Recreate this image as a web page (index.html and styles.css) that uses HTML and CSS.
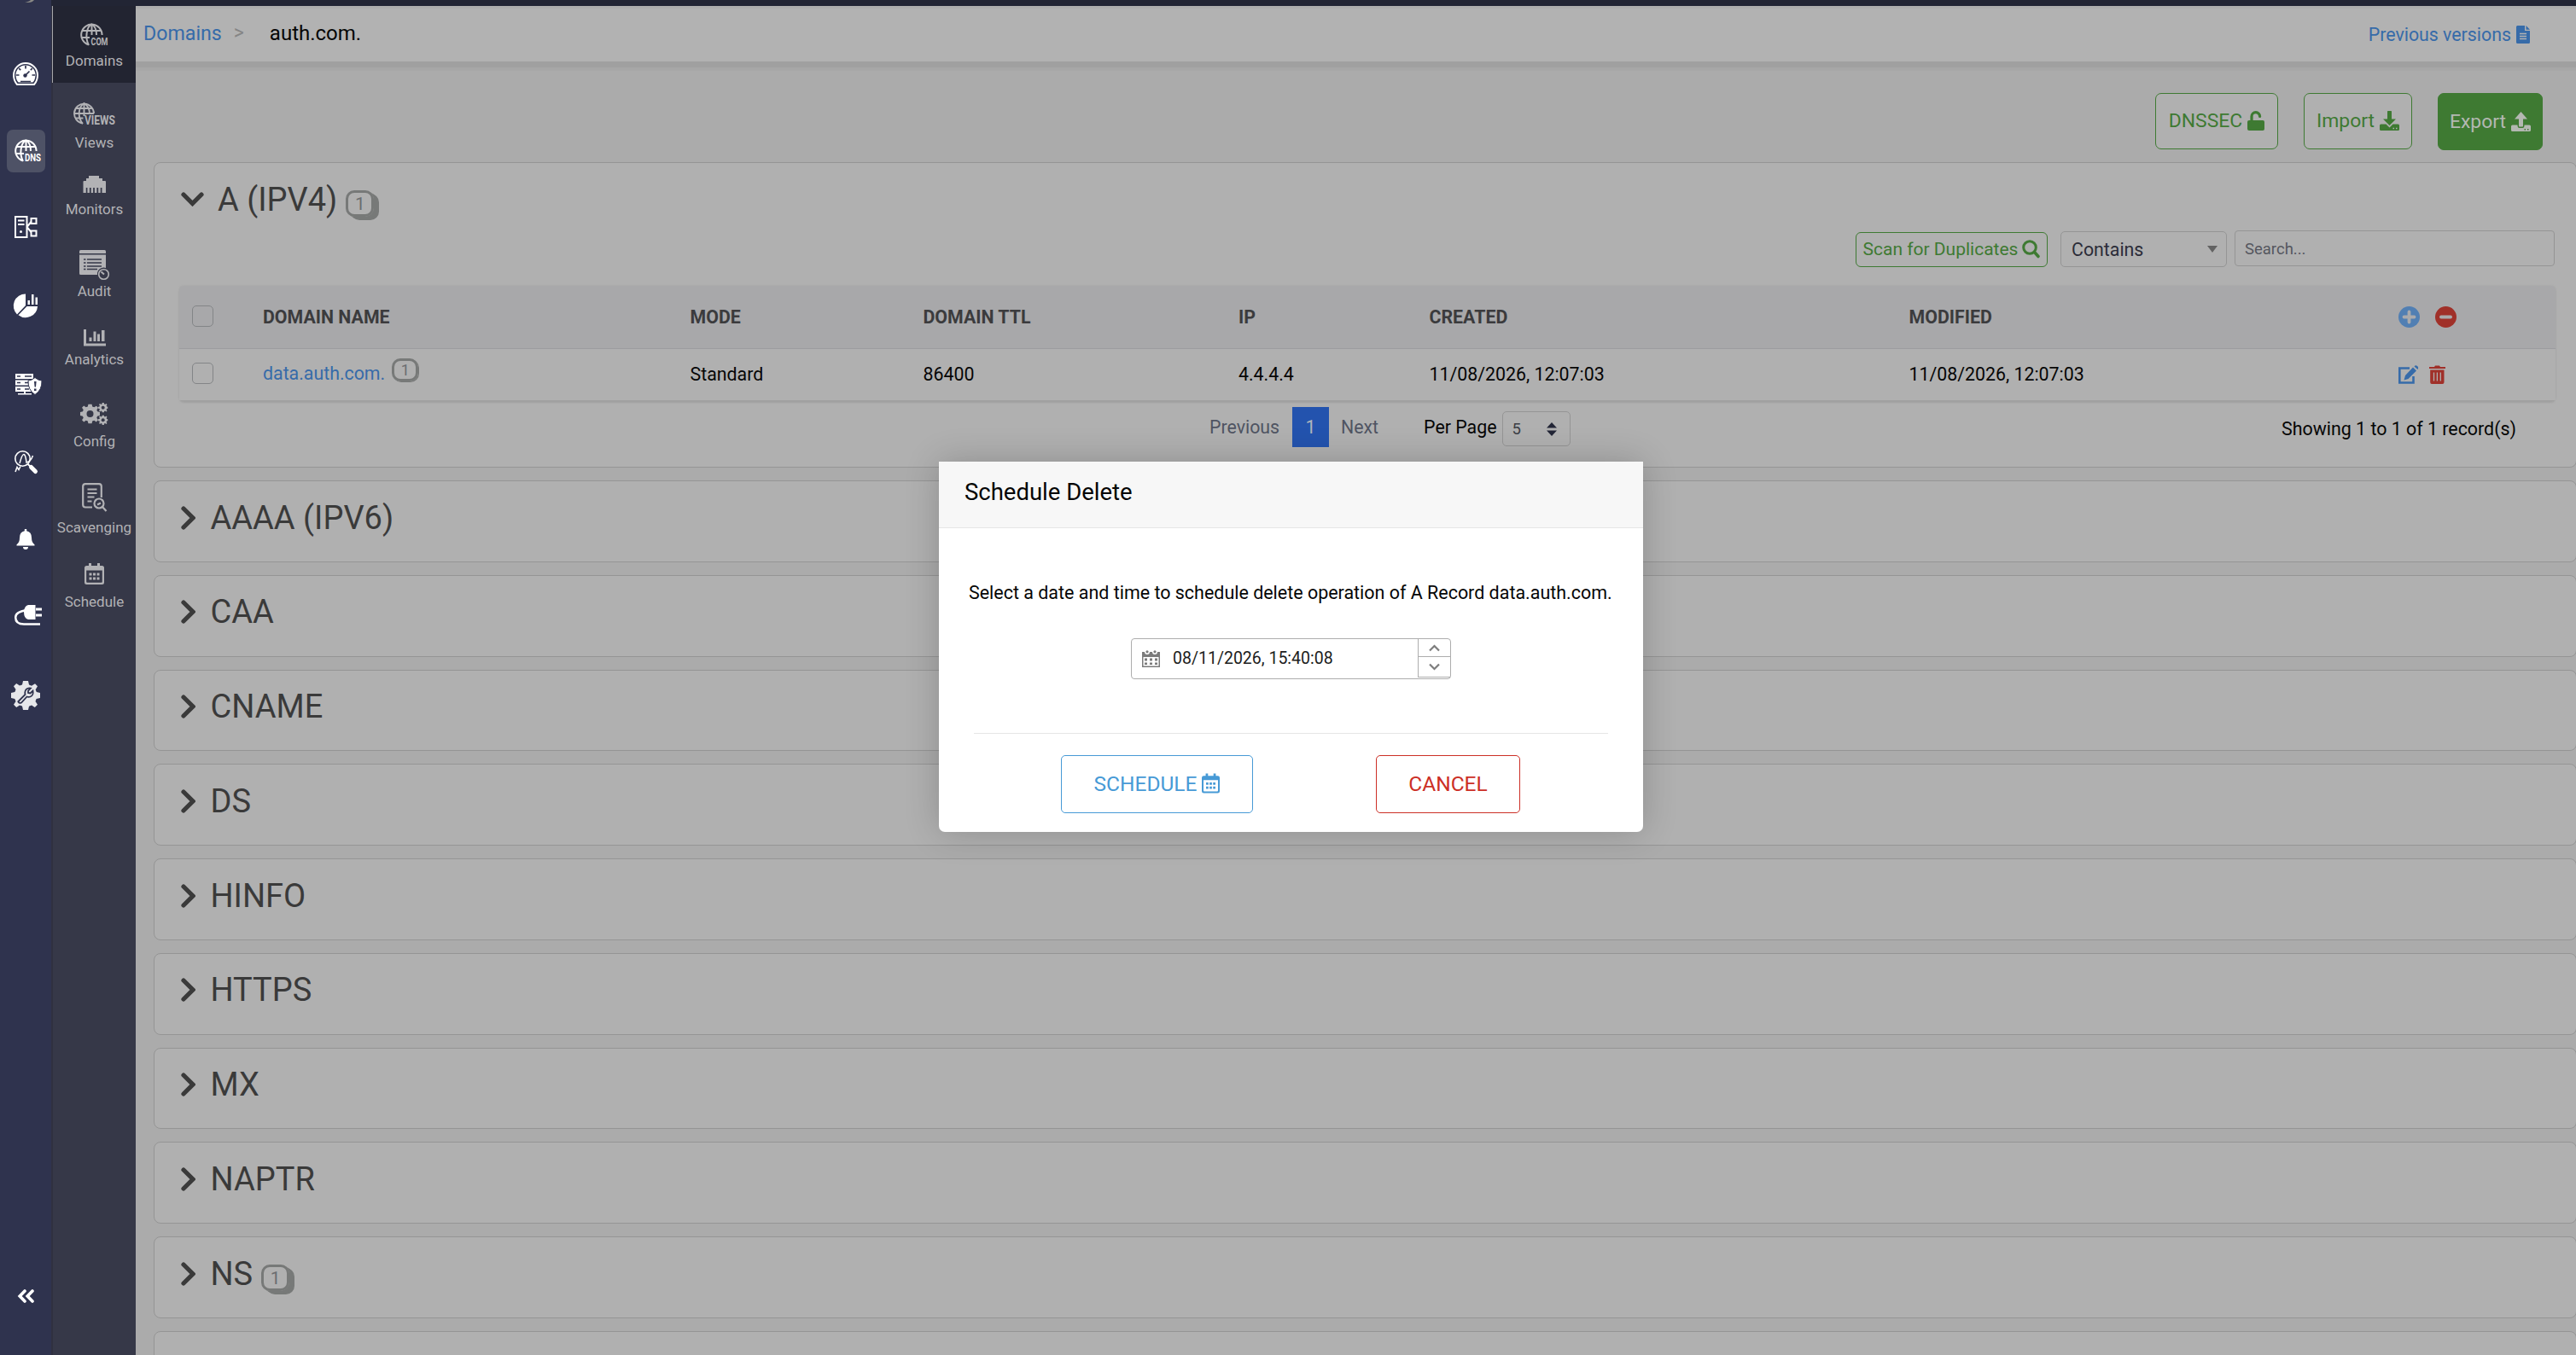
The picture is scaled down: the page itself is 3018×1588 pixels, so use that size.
FILE: index.html
```html
<!DOCTYPE html>
<html lang="en">

<head>
  <meta charset="UTF-8">
  <meta name="viewport" content="width=device-width, initial-scale=1.0">
  <title>auth.com. - Domains</title>
  <link rel="stylesheet" href="styles.css">
</head>

<body>
  <svg class="sprite">
    <symbol id="globe" viewBox="0 0 27 27">
      <g fill="none" stroke="currentColor" stroke-width="2">
        <path d="M9 25.2A12.2 12.2 0 1 1 25.6 14" />
        <path d="M10 26C5.500 18 7 4 13.500 1.500C17 3.500 19 8.500 19 14M2 9h23M1.500 17h9.500M13.500 1.500V14" />
      </g>
    </symbol>
    <symbol id="globe-grid" viewBox="0 0 26 26">
      <g fill="none" stroke="currentColor" stroke-width="1.900">
        <path d="M11 24.500A11.500 11.500 0 1 1 24 13" />
        <path d="M11 25C5 18 5 6 12.500 1C17 4 19 8 19 13.500M12.500 1V16M3 7h19M1 13h23M2.500 18.500h9" />
      </g>
    </symbol>
    <symbol id="chevron-right" viewBox="0 0 17 28">
      <path d="M3 3L14 14L3 25" fill="none" stroke="currentColor" stroke-width="5.200" stroke-linecap="round" stroke-linejoin="miter" />
    </symbol>
    <symbol id="chevron-down" viewBox="0 0 27 17">
      <path d="M3 3L13.500 13.500L24 3" fill="none" stroke="currentColor" stroke-width="5.200" stroke-linecap="round" />
    </symbol>
    <symbol id="calendar" viewBox="0 0 23 25">
      <path fill="currentColor" fill-rule="evenodd" d="M5 0h3v3h7V0h3v3h2.500Q23 3 23 5.500V22.500Q23 25 20.500 25H2.500Q0 25 0 22.500V5.500Q0 3 2.500 3H5zM2.200 8.500V21.800Q2.200 22.800 3.200 22.800H19.800Q20.800 22.800 20.800 21.800V8.500z" />
      <path fill="currentColor" d="M5.500 11.500h3v3h-3zM10 11.500h3v3h-3zM14.500 11.500h3v3h-3zM5.500 16.500h3v3h-3zM10 16.500h3v3h-3zM14.500 16.500h3v3h-3z" />
    </symbol>
    <symbol id="gear" viewBox="0 0 34 34">
      <path d="M14 0h6l1 4.500l3 1.200L28 3.200L31 6.300L28.600 10.200L29.800 13L34 14v6l-4.400 1L28.500 24L31 27.800L27.800 31L24 28.400L21 29.700L20 34h-6l-1-4.400L10 28.400L6.200 31L3 27.800L5.500 24L4.300 21L0 20v-6l4.400-1L5.500 10L3 6.200L6.200 3L10 5.600L13 4.400z" stroke-linejoin="round" />
    </symbol>
  </svg>

  <div class="app">
    <nav class="rail">
      <svg class="rail-logo" width="12" height="4"><path d="M0 2.500Q8 4 11 0H7Q5 2 0 2.500z" fill="#8a8a86" /></svg>
      <svg width="30" height="27" viewBox="0 0 30 27">
        <path d="M5 26Q1 21.500 1 15A14 14 0 0 1 29 15Q29 21.500 25 26z" fill="none" stroke="#fff" stroke-width="2" />
        <path d="M6.500 23.500Q3.500 20 3.500 15A11.500 11.500 0 0 1 26.500 15Q26.500 20 23.500 23.500z" fill="#fff" />
        <path d="M4 15h3.500M22.500 15H26M15 4v3.500M7.200 7.200l2 2M22.800 7.200l-2 2M14.500 15.500l5-5M9 22.500h12" stroke="#2f334e" stroke-width="1.700" />
        <circle cx="14.500" cy="15.500" r="2.200" fill="#2f334e" />
      </svg>
      <div class="rail-active">
        <svg width="31" height="27" viewBox="0 0 31 27">
          <use href="#globe" width="27" height="27" />
          <text x="12" y="26" font-size="12.500" textLength="19" lengthAdjust="spacingAndGlyphs">DNS</text>
        </svg>
      </div>
      <svg width="27" height="26" viewBox="0 0 27 26">
        <g fill="none" stroke="#fff" stroke-width="2">
          <path d="M1 1h13.500v24H1zM4 5.500h7.500M4 10h7.500M14.500 13l5-6M14.500 13l5 6" />
          <path d="M19.500 3h6v6h-6zM19.500 17.500h6v6h-6z" />
        </g>
        <circle cx="7.500" cy="18.500" r="1.500" fill="#fff" />
      </svg>
      <svg width="28" height="29" viewBox="0 0 28 29" fill="#fff">
        <path d="M14 0.500V14L4 24.500A14 14 0 0 1 14 0.500z" />
        <path d="M15.500 15H28A14 14 0 0 1 5.500 25.200z" />
        <path d="M16.500 8h2.500v5h-2.500zM21 1h2.500v12H21zM25.500 4.500h2.500v8.500h-2.500z" />
      </svg>
      <svg class="wide" width="31" height="25" viewBox="0 0 31 25">
        <path d="M0 0h21v6H0zM0 7.500h21v6H0zM0 15h21v6H0zM3 23h16v1.500H3zM10 21h2v3h-2z" fill="#fff" />
        <path d="M2 3h4M2 10.500h4M2 18h4M11 3h8M11 10.500h5M11 18h5" stroke="#2f334e" stroke-width="1.400" />
        <path d="M23 4.500Q27 8 31 8Q31.500 19 23 24.500Q14.500 19 15 8Q19 8 23 4.500z" fill="#fff" stroke="#2f334e" stroke-width="1" />
        <path d="M22 9h2.600l-.6 6.500h-1.400zM22 17.500h2.500v2.500H22z" fill="#2f334e" />
      </svg>
      <svg width="27" height="27" viewBox="0 0 27 27">
        <circle cx="9.500" cy="9.500" r="8.700" fill="none" stroke="#fff" stroke-width="1.600" />
        <path d="M1 25l2-5.500l2 3l2-4M6 15Q9 4 11 4.500Q13 5 14 14Q19 13 21.500 6" fill="none" stroke="#fff" stroke-width="1.500" />
        <path d="M15.500 16l3 2.500" stroke="#fff" stroke-width="2" />
        <path d="M19.500 19.500L24.500 24.500" stroke="#fff" stroke-width="5" stroke-linecap="round" />
      </svg>
      <svg width="22" height="24" viewBox="0 0 22 24" fill="#fff">
        <path d="M9.800 0h2.400v2.200Q18 3.500 18 10Q18 16 21.500 18.200V19.500H.5V18.200Q4 16 4 10Q4 3.500 9.800 2.200z" />
        <path d="M8 21h6Q14 24 11 24T8 21z" />
      </svg>
      <svg class="wide" width="32" height="24" viewBox="0 0 32 24">
        <path d="M14 6Q1.200 8 1.200 14.500Q1.200 22.500 11 22.500H30" fill="none" stroke="#fff" stroke-width="2.500" />
        <path d="M16 0h8.500v17H16Q11 15.500 11 8.500T16 0zM25 3.500h7v3h-7zM25 10.500h7v3h-7z" fill="#fff" />
      </svg>
      <svg width="34" height="34" viewBox="0 0 34 34">
        <use href="#gear" width="34" height="34" fill="#e6e7ea" />
        <path d="M9 23.500L16.500 16Q15.500 11 19 9Q21 8 23 8.500L20 11.500V14l2.500.5L25.500 11.500Q26.500 17 22.500 18.500Q20.500 19.300 18.500 18.500L12 25.500Q10.500 26.500 9 25.200T9 23.500z" fill="none" stroke="#2f334e" stroke-width="1.800" />
      </svg>
      <svg class="rail-collapse" width="19" height="16" viewBox="0 0 19 16">
        <path d="M8 2L2.200 8L8 14M17 2L11.200 8L17 14" fill="none" stroke="#fff" stroke-width="3.600" stroke-linecap="round" />
      </svg>
    </nav>

    <div class="right">
      <div class="topbar"></div>
      <div class="body">
        <nav class="subnav">
          <a class="item domains active">
            <svg width="33" height="27" viewBox="0 0 33 27">
              <use href="#globe" width="27" height="27" />
              <text x="12.500" y="26" font-size="13" textLength="20" lengthAdjust="spacingAndGlyphs">COM</text>
            </svg>
            Domains
          </a>
          <a class="item views">
            <svg width="49" height="27" viewBox="0 0 49 27">
              <use href="#globe-grid" width="26" height="26" />
              <text x="13" y="25.500" font-size="14" textLength="36" lengthAdjust="spacingAndGlyphs">VIEWS</text>
            </svg>
            Views
          </a>
          <a class="item monitors">
            <svg width="27" height="20" viewBox="0 0 27 20">
              <path fill="currentColor" d="M7 0h12v3h4v3h3q1 0 1 1v13h-4.500v-6h-1.800v6h-2.500v-6h-1.800v6h-2.500v-6h-1.800v6H9.700v-6H7.900v6H5.400v-6H3.800v6H.5V7q0-1 1-1H4V3h3z" />
            </svg>
            Monitors
          </a>
          <a class="item audit">
            <svg width="35" height="35" viewBox="0 0 35 35">
              <path fill="currentColor" d="M1.500 0h28Q31 0 31 1.500V4H0V1.500Q0 0 1.500 0zM0 5.500h31V21A7.500 7.500 0 0 0 21 29H1.500Q0 29 0 27.500z" />
              <path d="M5 11h2.500M9 11h17M5 15h2.500M9 15h17M5 19h2.500M9 19h17M5 22.500h2.500M9 22.500h12" stroke="#363848" stroke-width="1.700" />
              <circle cx="28.500" cy="28.500" r="5.800" fill="none" stroke="currentColor" stroke-width="1.600" />
              <path d="M25.500 25.500l3.500 3" stroke="currentColor" stroke-width="2" />
            </svg>
            Audit
          </a>
          <a class="item analytics">
            <svg width="26" height="20" viewBox="0 0 26 20">
              <path fill="currentColor" d="M0 0h3v16.500h23V19.500H0zM6.500 9.500h3V14h-3zM11.500 2.500h3V14h-3zM16 5.500h3V14h-3zM21 1h3.500v13H21z" />
            </svg>
            Analytics
          </a>
          <a class="item config">
            <svg width="33" height="26" viewBox="0 0 33 26">
              <use href="#gear" x="0" y="1.500" width="23" height="23" fill="currentColor" />
              <use href="#gear" x="21" y="0" width="11.500" height="11.500" fill="currentColor" />
              <use href="#gear" x="21" y="14.500" width="11.500" height="11.500" fill="currentColor" />
              <g fill="#363848"><circle cx="11.500" cy="13" r="4" /><circle cx="26.700" cy="5.700" r="2" /><circle cx="26.700" cy="20.200" r="2" /></g>
            </svg>
            Config
          </a>
          <a class="item scavenging">
            <svg width="29" height="34" viewBox="0 0 29 34">
              <g fill="none" stroke="currentColor" stroke-width="2.200">
                <path d="M12 28.500H4Q1.200 28.500 1.200 25.500V4Q1.200 1.200 4 1.200H20Q22.800 1.200 22.800 4V17" />
                <path d="M6.500 7.500h11M6.500 12h11M6.500 16.500h8M6.500 21.500h5" stroke-width="1.800" />
                <circle cx="20" cy="24" r="5.500" />
                <path d="M24 28l4.500 5M18 25.500l4-2" />
              </g>
            </svg>
            Scavenging
          </a>
          <a class="item schedule">
            <svg width="23" height="25"><use href="#calendar" /></svg>
            Schedule
          </a>
        </nav>

        <main class="main">
          <header class="header">
            <a class="crumb">Domains</a>
            <span class="sep">&gt;</span>
            <span class="current">auth.com.</span>
            <a class="versions">Previous versions
              <svg width="16" height="21" viewBox="0 0 16 21">
                <path fill="currentColor" d="M1.500 0H10v6h6v13.500q0 1.500-1.500 1.500h-13Q0 21 0 19.500v-18Q0 0 1.500 0zM11.500 0L16 4.700h-4.500z" />
                <path d="M4 9.500h8M4 12.500h8M4 15.500h8" stroke="#b2b2b2" stroke-width="1.300" />
              </svg>
            </a>
          </header>

          <div class="actions">
            <button class="btn dnssec">DNSSEC
              <svg width="20" height="23" viewBox="0 0 20 23">
                <path d="M5 12V6.500A4.800 4.800 0 0 1 14.600 6.500" fill="none" stroke="currentColor" stroke-width="3.200" stroke-linecap="round" />
                <rect y="11" width="20" height="12" rx="2" fill="currentColor" />
              </svg>
            </button>
            <button class="btn import">Import
              <svg width="23" height="23" viewBox="0 0 23 23" fill="currentColor">
                <path d="M9.700 0h3.600q.7 0 .7.700V9.500h5L11.500 17L4 9.500h5V.7Q9 0 9.700 0z" />
                <path d="M1.500 15.500H7.500L11.500 19.500L15.500 15.500h6Q23 15.500 23 17v4.500Q23 23 21.500 23h-20Q0 23 0 21.500V17Q0 15.500 1.500 15.500z" />
                <path d="M15.500 20.500h1.500M19 20.500h1.500" stroke="#b0b0b0" stroke-width="1.500" />
              </svg>
            </button>
            <button class="btn export">Export
              <svg width="23" height="23" viewBox="0 0 23 23" fill="currentColor">
                <path d="M9.700 17.500h3.600q.7 0 .7-.7V8.500h5L11.500 0L4 8.500h5v8.300q0 .7.700.7z" />
                <path d="M1.500 15.500H7.500Q7.500 19 9.700 19h3.600Q15.500 19 15.500 15.500h6Q23 15.500 23 17v4.500Q23 23 21.500 23h-20Q0 23 0 21.500V17Q0 15.500 1.500 15.500z" />
                <path d="M15.500 20.700h1.500M19 20.700h1.500" stroke="#3e7a32" stroke-width="1.500" />
              </svg>
            </button>
          </div>

          <section class="card open">
            <div class="title">
              <svg width="27" height="17"><use href="#chevron-down" /></svg>
              A (IPV4)
              <span class="badge">1</span>
            </div>

            <div class="toolbar">
              <button class="scan">Scan for Duplicates
                <svg width="21" height="22" viewBox="0 0 21 22">
                  <circle cx="9" cy="9" r="7.300" fill="none" stroke="currentColor" stroke-width="3" />
                  <path d="M14.500 14.500L19 19.500" stroke="currentColor" stroke-width="3.600" stroke-linecap="round" />
                </svg>
              </button>
              <div class="select">Contains
                <svg width="12" height="8"><path d="M0 0h12L6 8z" fill="#626262" /></svg>
              </div>
              <div class="search">Search...</div>
            </div>

            <div class="table">
              <div class="row head">
                <span><i class="check"></i></span>
                <span>DOMAIN NAME</span>
                <span>MODE</span>
                <span>DOMAIN TTL</span>
                <span>IP</span>
                <span>CREATED</span>
                <span>MODIFIED</span>
                <span class="icons">
                  <svg width="25" height="25" viewBox="0 0 25 25">
                    <circle cx="12.500" cy="12.500" r="12.500" fill="#517fb3" />
                    <path d="M12.500 6.500v12M6.500 12.500h12" stroke="#aaaaac" stroke-width="3.800" stroke-linecap="round" />
                  </svg>
                  <svg class="minus" width="25" height="25" viewBox="0 0 25 25">
                    <circle cx="12.500" cy="12.500" r="12.500" fill="#a03029" />
                    <path d="M7 12.500h11" stroke="#aaaaac" stroke-width="4" stroke-linecap="round" />
                  </svg>
                </span>
              </div>
              <div class="row">
                <span><i class="check"></i></span>
                <span><a class="link">data.auth.com.</a><b class="badge small">1</b></span>
                <span>Standard</span>
                <span>86400</span>
                <span>4.4.4.4</span>
                <span>11/08/2026, 12:07:03</span>
                <span>11/08/2026, 12:07:03</span>
                <span class="icons">
                  <svg width="24" height="22" viewBox="0 0 24 22">
                    <path d="M13 3.500H1.300V20.500H17.500V13" fill="none" stroke="#366ba9" stroke-width="2.600" />
                    <path d="M17 2.500l4 4L11.500 16L6.500 17.500L8 12zM18.500 1.500Q20-.5 22 1T22.500 5z" fill="#366ba9" />
                  </svg>
                  <svg class="trash" width="19" height="22" viewBox="0 0 19 22">
                    <path d="M0 2h6l1-1.500h5L13 2h6v2H0zM1.200 5.500H17.500V20Q17.500 22 15.500 22h-12.500Q1.200 22 1.200 20z" fill="#a03029" />
                    <path d="M5.500 8.500v10M9.400 8.500v10M13.300 8.500v10" stroke="#b0b0b0" stroke-width="1.300" />
                  </svg>
                </span>
              </div>
            </div>

            <div class="paging">
              <div class="pages">
                <span class="prev">Previous</span>
                <span class="page">1</span>
                <span class="next">Next</span>
              </div>
              <span class="per">Per Page</span>
              <div class="size">5
                <svg width="12" height="16"><path d="M0 6.500L6 0L12 6.500zM0 9.500h12L6 16z" fill="#222536" /></svg>
              </div>
              <span class="showing">Showing 1 to 1 of 1 record(s)</span>
            </div>
          </section>

          <section class="card"><div class="title"><svg width="17" height="28"><use href="#chevron-right" /></svg>AAAA (IPV6)</div></section>
          <section class="card"><div class="title"><svg width="17" height="28"><use href="#chevron-right" /></svg>CAA</div></section>
          <section class="card"><div class="title"><svg width="17" height="28"><use href="#chevron-right" /></svg>CNAME</div></section>
          <section class="card"><div class="title"><svg width="17" height="28"><use href="#chevron-right" /></svg>DS</div></section>
          <section class="card"><div class="title"><svg width="17" height="28"><use href="#chevron-right" /></svg>HINFO</div></section>
          <section class="card"><div class="title"><svg width="17" height="28"><use href="#chevron-right" /></svg>HTTPS</div></section>
          <section class="card"><div class="title"><svg width="17" height="28"><use href="#chevron-right" /></svg>MX</div></section>
          <section class="card"><div class="title"><svg width="17" height="28"><use href="#chevron-right" /></svg>NAPTR</div></section>
          <section class="card"><div class="title"><svg width="17" height="28"><use href="#chevron-right" /></svg>NS<span class="badge">1</span></div></section>
          <section class="card"></section>
        </main>
      </div>
    </div>
  </div>

  <div class="modal">
    <div class="modal-head">Schedule Delete</div>
    <div class="modal-body">
      <p>Select a date and time to schedule delete operation of A Record data.auth.com.</p>
      <div class="picker">
        <svg width="21" height="20" viewBox="0 0 21 20">
          <path fill="#7b7b7b" fill-rule="evenodd" d="M0 2h3a3 3 0 0 0 6 0h3a3 3 0 0 0 6 0h3v18H0zM1.500 8v10.500h18V8z" />
          <circle cx="6" cy="1.800" r="1.600" fill="#7b7b7b" /><circle cx="15" cy="1.800" r="1.600" fill="#7b7b7b" />
          <path fill="#7b7b7b" d="M3 9.500h3v3H3zM9 9.500h3v3H9zM15 9.500h3v3h-3zM3 14.500h3v2.500H3zM9 14.500h3v2.500H9zM15 14.500h3v2.500h-3z" />
        </svg>
        <span class="value">08/11/2026, 15:40:08</span>
        <div class="spin">
          <span><svg width="13" height="9"><path d="M1 7.500L6.500 2L12 7.500" fill="none" stroke="#7d7d7d" stroke-width="2.200" /></svg></span>
          <span><svg width="13" height="9"><path d="M1 1.500L6.500 7L12 1.500" fill="none" stroke="#7d7d7d" stroke-width="2.200" /></svg></span>
        </div>
      </div>
    </div>
    <div class="modal-foot">
      <button class="mbtn blue">SCHEDULE<svg width="21" height="24"><use href="#calendar" /></svg></button>
      <button class="mbtn red">CANCEL</button>
    </div>
  </div>
</body>

</html>
```
FILE: styles.css
```css
:root {
  --rail: #2f334e;
  --subnav: #363848;
  --dark: #222534;
  --green: #3e7a32;
  --blue: #366ba9;
  --line: #959595;
}

* {
  box-sizing: border-box;
}

html,
body {
  margin: 0;
  height: 100%;
  overflow: hidden;
  font-family: Roboto, sans-serif;
  font-size: 21.33px;
  color: #060606;
}

button {
  font-family: inherit;
  background: none;
}

svg {
  display: block;
  flex-shrink: 0;
  overflow: visible;
}

.sprite {
  position: absolute;
  width: 0;
  height: 0;
}

.app {
  display: flex;
  height: 100%;
}

/* left rail */
.rail {
  width: 60px;
  flex-shrink: 0;
  display: flex;
  flex-direction: column;
  align-items: center;
  gap: 65px;
  background: var(--rail);
  padding-bottom: 61px;

  .rail-logo {
    margin: 0 0 4px 10px;
  }

  .wide {
    margin-left: 6px;
  }
}

.rail-active {
  width: 45px;
  height: 50px;
  margin: -13px 0 -14px 1px;
  padding: 11px 0 0 9px;
  border-radius: 7px;
  background: #4e5266;
  color: #fff;
}

.rail-collapse {
  margin-top: auto;
}

.rail-active text,
.item text {
  font-family: Roboto, sans-serif;
  font-weight: 700;
  fill: currentColor;
}

.right {
  flex: 1;
  min-width: 0;
  display: flex;
  flex-direction: column;
}

.topbar {
  height: 7px;
  flex-shrink: 0;
  background: var(--dark);
}

.body {
  flex: 1;
  min-height: 0;
  display: flex;
}

/* second nav */
.subnav {
  width: 99px;
  flex-shrink: 0;
  background: var(--subnav);
  border-left: 2px solid #303140;
}

.item {
  display: flex;
  flex-direction: column;
  align-items: center;
  gap: 9px;
  font-size: 17px;
  line-height: 20px;
  color: #b2b2b5;

  &.domains {
    height: 90px;
    margin-left: -1px;
    padding-top: 20px;
    gap: 7px;
    background: #222431;
    border-left: 1px solid #a8a8aa;
  }

  &.views {
    padding-top: 23px;
    gap: 10px;
  }

  &.monitors {
    padding-top: 29px;
  }

  &.audit {
    padding-top: 38px;
    gap: 3px;
  }

  &.analytics {
    padding-top: 35px;
    gap: 5px;
  }

  &.config {
    padding-top: 41px;
    gap: 9px;
  }

  &.scavenging {
    padding-top: 39px;
    gap: 8px;
  }

  &.schedule {
    padding-top: 32px;
    gap: 10px;
  }
}

/* page */
.main {
  flex: 1;
  min-width: 0;
  overflow: hidden;
  background: #ababab;
}

.header {
  display: flex;
  align-items: center;
  height: 72px;
  padding: 0 54px 2px 9px;
  background: #b2b2b2;
  border-bottom: 7px solid #a0a0a0;
  box-shadow: inset 0 3px 0 #adadad, 0 4px 0 #a7a7a7;

  .crumb {
    font-size: 23.2px;
    color: var(--blue);
  }

  .sep {
    margin-left: 14px;
    font-size: 23px;
    color: #858585;
  }

  .current {
    margin-left: 30px;
    font-size: 24px;
  }

  .versions {
    display: flex;
    align-items: center;
    gap: 6px;
    margin-left: auto;
    padding-top: 4px;
    color: var(--blue);
  }
}

.actions {
  display: flex;
  align-items: flex-start;
  justify-content: flex-end;
  height: 67px;
  margin: 30px 39px 14px 0;
}

.btn {
  display: flex;
  align-items: center;
  justify-content: center;
  gap: 6px;
  height: 66px;
  padding: 0 0 2px;
  font-size: 22.9px;
  color: var(--green);
  background: #b0b0b0;
  border: 1px solid var(--green);
  border-radius: 7px;

  &.dnssec {
    width: 144px;
  }

  &.import {
    width: 127px;
    margin-left: 30px;
  }

  &.export {
    width: 123px;
    height: 67px;
    margin-left: 30px;
    padding-bottom: 1px;
    color: #b4b8b2;
    background: var(--green);
  }
}

.card {
  width: 2839px;
  height: 95.75px;
  margin: 0 0 15px 21px;
  padding-top: 19px;
  background: #b0b0b0;
  border: 1px solid var(--line);
  border-radius: 8px;

  &.open {
    height: auto;
    padding-bottom: 23px;

    .title svg {
      margin-right: 16px;
    }
  }
}

.title {
  display: flex;
  align-items: center;
  height: 47px;
  padding-left: 31px;
  font-size: 38px;
  color: #3a3a3a;

  svg {
    margin-right: 17.500px;
  }
}

.badge {
  width: 33px;
  height: 31px;
  margin: 10px 0 0 10px;
  font-size: 21px;
  font-weight: 400;
  line-height: 26px;
  text-align: center;
  color: #6b6d70;
  border: 3px solid #777978;
  border-radius: 10px;
  box-shadow: 3px 2px 0 #777978, 6px 4px 0 #777978;

  &.small {
    width: 31px;
    height: 27px;
    margin: -10px 0 0 8px;
    font-size: 18px;
    line-height: 22px;
    box-shadow: 1px 1px 0 #777978;
  }
}

.toolbar {
  display: flex;
  align-items: center;
  height: 43px;
  margin: 13px 25px 22px 0;
  justify-content: flex-end;
}

.scan {
  display: flex;
  align-items: center;
  justify-content: center;
  gap: 5px;
  width: 225px;
  height: 41px;
  margin-top: 2px;
  padding: 0 0 2px;
  font-size: 21px;
  color: var(--green);
  border: 1.500px solid var(--green);
  border-radius: 6px;
}

.select {
  display: flex;
  align-items: center;
  justify-content: space-between;
  width: 195px;
  height: 42px;
  margin: 1px 9px 0 15px;
  padding: 0 10px 0 12px;
  color: #2b2c38;
  border: 1px solid var(--line);
  border-radius: 5px;
}

.search {
  width: 375px;
  height: 42px;
  margin-top: -1px;
  padding-left: 11px;
  font-size: 18.500px;
  line-height: 42px;
  color: #55575f;
  border: 1px solid var(--line);
  border-radius: 4px;
}

.table {
  width: 2784px;
  margin-left: 29px;
  border-radius: 5px;
  box-shadow: 0 3px 2px #a0a0a0, 0 0 2px #a0a0a0;
}

.row {
  display: grid;
  grid-template-columns: 98px 500.500px 273px 369.500px 223.500px 562px 573.500px 1fr;
  align-items: center;
  height: 60px;
  padding-bottom: 1px;
  background: #b0b0b0;

  &.head {
    height: 74px;
    padding-bottom: 0;
    font-weight: 700;
    color: #3b3b3d;
    background: #a8a8aa;
    border-bottom: 1px solid #9c9c9f;
    border-radius: 5px 5px 0 0;
  }

  span {
    display: flex;
    align-items: center;
  }
}

.check {
  width: 25px;
  height: 25px;
  margin: -2px 0 0 15px;
  border: 1.500px solid #838587;
  border-radius: 5px;
}

.link {
  margin-top: -2px;
  color: var(--blue);
}

.minus {
  margin-left: 18px;
}

.trash {
  margin-left: 12px;
}

.paging {
  display: flex;
  align-items: center;
  height: 47px;
  margin: 8px 70px 0 1220px;
}

.pages {
  display: flex;
  align-items: center;
  color: #4f5462;

  .prev {
    width: 113px;
    padding-left: 16px;
  }

  .page {
    width: 43px;
    line-height: 47px;
    text-align: center;
    color: #b0b4bc;
    background: #2353ae;
  }

  .next {
    padding-left: 14px;
  }
}

.per {
  margin-left: 53px;
}

.size {
  display: flex;
  align-items: center;
  justify-content: space-between;
  width: 80px;
  height: 41px;
  margin: 4px 0 0 7px;
  padding: 0 15px 0 10px;
  font-size: 18.500px;
  color: #3c3e45;
  border: 1px solid var(--line);
  border-radius: 5px;
}

.showing {
  margin: 4px 0 0 auto;
  font-size: 21.400px;
}

/* schedule delete dialog */
.modal {
  position: absolute;
  left: 1100px;
  top: 541px;
  width: 825px;
  height: 434px;
  display: flex;
  flex-direction: column;
  background: #fff;
  border-radius: 0 0 7px 7px;
  box-shadow: 0 0 40px rgba(0, 0, 0, .2);
}

.modal-head {
  height: 78px;
  padding-left: 30px;
  font-size: 27.500px;
  line-height: 72px;
  background: #f7f7f7;
  border-bottom: 1px solid #e6e6e6;
}

.modal-body {
  flex: 1;
  margin: 0 41px;
  border-bottom: 1px solid #e6e6e6;

  p {
    margin: 59px 0 37px -6px;
    line-height: 33px;
    font-size: 21.460px;
    white-space: nowrap;
  }
}

.picker {
  display: flex;
  align-items: center;
  width: 375px;
  height: 48px;
  margin-left: 184px;
  padding-left: 12px;
  border: 1px solid #adadad;
  border-radius: 4px;

  .value {
    margin: -1px 0 0 15px;
    font-size: 19.500px;
    color: #1c1d20;
  }
}

.spin {
  align-self: flex-start;
  width: 38px;
  height: 45px;
  margin-left: auto;
  border-left: 1px solid #adadad;
  border-bottom: 1px solid #adadad;

  span {
    display: flex;
    align-items: center;
    justify-content: center;
    height: 23px;
  }

  span:first-child {
    height: 21px;
    border-bottom: 1px solid #adadad;
  }
}

.modal-foot {
  display: flex;
  height: 115px;
  padding: 25px 0 0 143px;
}

.mbtn {
  display: flex;
  align-items: center;
  justify-content: center;
  gap: 6px;
  height: 68px;
  padding: 0 0 2px;
  font-size: 24.500px;
  border-radius: 5px;

  &.blue {
    width: 225px;
    color: #479ad6;
    border: 1px solid #479ad6;
  }

  &.red {
    width: 169px;
    margin-left: 144px;
    color: #cc2f26;
    border: 1px solid #cc2f26;
  }
}
```
